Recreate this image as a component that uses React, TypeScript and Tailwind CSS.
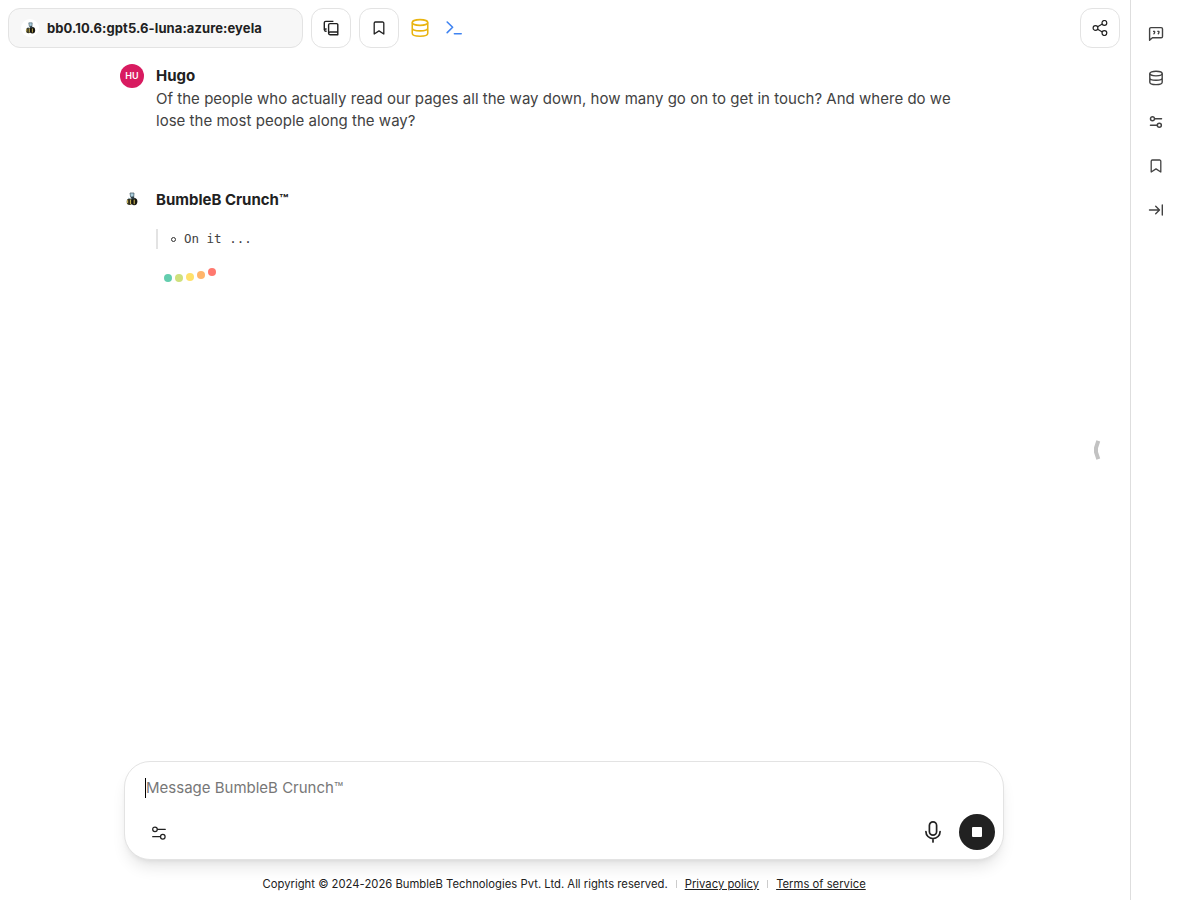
import React from "react";

const Bee = ({ className = "" }: { className?: string }) => (
  <svg viewBox="0 0 12 14" className={className}>
    <path d="M4 1h4l-.3 4H4.6z" fill="#a9cddd" stroke="#40545f" strokeWidth=".7" />
    <ellipse cx="3.6" cy="9.8" rx="2.9" ry="3.2" fill="#35321f" />
    <ellipse cx="8.2" cy="9.6" rx="3.2" ry="3.7" fill="#17150f" />
    <path d="M1.6 8.2v3M4.6 7.6v4.6M8.2 7.6v4.6" stroke="#d8c25c" strokeWidth="1" />
    <path d="m4.6 5.2 2.8-.6 1.8 2.2-3.4.6z" fill="#2c3b42" />
    <path d="M2.2 6.2 4.6 6.8" stroke="#8ba9b5" strokeWidth=".8" />
  </svg>
);

const Sliders = ({ className = "", weight = 1.25 }: { className?: string; weight?: number }) => (
  <svg viewBox="0 0 16 16" fill="none" stroke="currentColor" strokeWidth={weight} strokeLinecap="round" className={className}>
    <circle cx="4" cy="4.3" r="2.3" />
    <path d="M6.5 4.3h7.8M1.7 11.7h7.8" />
    <circle cx="11.8" cy="11.7" r="2.3" />
  </svg>
);

const Bookmark = ({ className = "" }: { className?: string }) => (
  <svg viewBox="0 0 16 16" fill="none" stroke="currentColor" strokeWidth="1.3" strokeLinejoin="round" className={className}>
    <path d="M3.2 3.2a1.2 1.2 0 0 1 1.2-1.2h7.2a1.2 1.2 0 0 1 1.2 1.2V14L8 10.9 3.2 14z" />
  </svg>
);

const Database = ({ className = "", weight = 1.4 }: { className?: string; weight?: number }) => (
  <svg viewBox="0 0 16 16" fill="none" stroke="currentColor" strokeWidth={weight} className={className}>
    <ellipse cx="8" cy="3.6" rx="6.2" ry="2.3" />
    <path d="M1.8 3.6v8.6c0 1.4 2.6 2.4 6.2 2.4s6.2-1 6.2-2.4V3.6M1.8 8c0 1.3 2.6 2.3 6.2 2.3s6.2-1 6.2-2.3" />
  </svg>
);

const Copy = () => (
  <svg viewBox="0 0 16 16" fill="none" stroke="currentColor" strokeWidth="1.4" strokeLinejoin="round" className="size-4">
    <path d="M14.8 12V4.7a1.1 1.1 0 0 0-1.1-1.1H7A1.4 1.4 0 0 0 5.6 5v8.3a1.4 1.4 0 0 0 1.4 1.4h7.8V12H7a1.4 1.4 0 0 0-1.4 1.3" />
    <path d="M3.6 11.2h-.9a1.4 1.4 0 0 1-1.4-1.4V2.9a1.5 1.5 0 0 1 1.5-1.5h7.6M3.6 9H2.7a1.4 1.4 0 0 0-1.4 1.1" />
  </svg>
);

const Share = () => (
  <svg viewBox="0 0 16 16" fill="none" stroke="currentColor" strokeWidth="1.2" className="size-4">
    <circle cx="3.5" cy="8" r="2.4" />
    <circle cx="12.4" cy="2.9" r="2.4" />
    <circle cx="12.4" cy="13.1" r="2.4" />
    <path d="m5.6 6.8 4.7-2.7M5.6 9.2l4.7 2.7" />
  </svg>
);

const Quote = () => (
  <svg viewBox="0 0 16 16" fill="none" stroke="currentColor" strokeWidth="1.4" strokeLinejoin="round" className="size-4">
    <path d="M1.6 14.2V2.9a1.3 1.3 0 0 1 1.3-1.3h10.3a1.3 1.3 0 0 1 1.3 1.3v7.6a1.3 1.3 0 0 1-1.3 1.3H4.4z" />
    <path d="M5 5.4h1.6v1.1c0 .8-.4 1.3-1.1 1.6M9.3 5.4h1.6v1.1c0 .8-.4 1.3-1.1 1.6" />
  </svg>
);

const squareButton = "flex size-10 items-center justify-center rounded-xl border border-[#e3e3e3] bg-white text-[#212121]";
const dots = ["bg-[#63cdae] mt-1.5", "bg-[#cfe07c] mt-1.5", "bg-[#ffe16b] mt-[5px]", "bg-[#ffb56b] mt-[3px]", "bg-[#ff796f]"];

export default function App() {
  return (
    <div className="flex h-[900px] w-[1180px] overflow-hidden bg-white font-['Inter',sans-serif] text-[#212121]">
      <main className="flex w-[1130px] flex-col">
        <header className="flex h-14 shrink-0 items-center pr-2.5 pl-2">
          <button className="flex h-10 w-[295px] items-center rounded-xl border border-[#e3e3e3] bg-[#f7f7f7] pl-3">
            <span className="flex size-[18px] items-center justify-center rounded-full bg-white">
              <Bee className="h-3 w-[11px]" />
            </span>
            <span className="ml-2 text-[13px] leading-5 font-bold tracking-[0.09px]">bb0.10.6:gpt5.6-luna:azure:eyela</span>
          </button>
          <button aria-label="Copy" className={`ml-2 ${squareButton}`}><Copy /></button>
          <button aria-label="Bookmark" className={`ml-2 ${squareButton}`}><Bookmark className="size-4" /></button>
          <Database className="ml-[11px] size-5 text-[#e9b410]" weight={1.25} />
          <svg viewBox="0 0 16 14" fill="none" stroke="#3f83f1" strokeWidth="1.6" strokeLinecap="round" strokeLinejoin="round" className="ml-4 h-3.5 w-4">
            <path d="m1.2 1 5.4 5.3-5.4 5.3M8.4 12.8h6.8" />
          </svg>
          <button aria-label="Share" className={`ml-auto ${squareButton}`}><Share /></button>
        </header>

        <section className="flex flex-1 pl-[120px]">
          <div className="w-[850px] pt-2">
            <article className="flex gap-3">
              <div className="flex size-6 shrink-0 items-center justify-center rounded-full bg-[#d81b60] text-[9px] font-semibold text-white">HU</div>
              <div>
                <h2 className="text-[15px] leading-6 font-bold">Hugo</h2>
                <p className="w-[814px] text-[15px] leading-[22px] tracking-[0.021px] text-[#424242]">
                  Of the people who actually read our pages all the way down, how many go on to get in touch? And where do we<br />lose the most people along the way?
                </p>
              </div>
            </article>
            <article className="mt-14 flex gap-3">
              <div className="flex size-6 shrink-0 items-start justify-center pt-1"><Bee className="h-3.5 w-3" /></div>
              <div>
                <h2 className="text-[15px] leading-6 font-bold">BumbleB Crunch™</h2>
                <div className="mt-[17px] flex h-5 items-center border-l-2 border-[#e3e3e3] pl-[13px] font-['DejaVu_Sans_Mono',monospace] text-[12.5px] text-[#424242]">
                  <span className="mr-2 size-[5px] rounded-full border border-[#303030]" />
                  <span className="whitespace-pre">On it ...</span>
                </div>
                <div className="mt-[19px] ml-2 flex gap-[3px]">
                  {dots.map((dot) => <span key={dot} className={`size-2 rounded-full ${dot}`} />)}
                </div>
              </div>
            </article>
          </div>
          <div className="ml-auto flex w-10 items-start pt-[384px]">
            <svg viewBox="0 0 8 20" className="ml-[3px] h-5 w-2" fill="none" stroke="#c2c2c2" strokeWidth="4" strokeLinejoin="round">
              <path d="M5.3.8 3 7.8v4.4l2.3 7" />
            </svg>
          </div>
        </section>

        <form className="ml-[124px] flex h-[99px] w-[880px] shrink-0 flex-col rounded-[26px] border border-[#e3e3e3] bg-white shadow-[0_10px_15px_-3px_rgba(0,0,0,0.1),0_4px_6px_-4px_rgba(0,0,0,0.1)]">
          <div className="mt-4 ml-5 flex h-5 items-center border-l border-black text-[15px] text-[#777]">Message BumbleB Crunch™</div>
          <div className="mt-4 flex h-9 items-center pr-2 pl-[26px]">
            <Sliders className="mt-0.5 size-4" />
            <svg viewBox="0 0 24 24" fill="none" stroke="currentColor" strokeWidth="1.7" strokeLinecap="round" className="ml-auto size-6">
              <rect x="8.4" y="1.8" width="7.2" height="13.4" rx="3.6" />
              <path d="M4.9 11.5a7.1 7.1 0 0 0 14.2 0M12 18.7v3.2" />
            </svg>
            <button type="button" aria-label="Stop" className="ml-3.5 flex size-9 items-center justify-center rounded-full bg-[#212121]">
              <span className="size-2.5 rounded-[1px] bg-white" />
            </button>
          </div>
        </form>
        <footer className="flex h-10 shrink-0 items-center pt-2 pl-[262.5px] text-[11.25px] leading-4 tracking-[0.015px] whitespace-nowrap">
          <span>Copyright © 2024-2026 BumbleB Technologies Pvt. Ltd. All rights reserved.</span>
          <span className="mx-2 h-2 w-px bg-[#ccc]" />
          <span className="underline">Privacy policy</span>
          <span className="mx-2 h-2 w-px bg-[#ccc]" />
          <span className="underline">Terms of service</span>
        </footer>
      </main>
      <aside className="flex w-[50px] flex-col items-center gap-7 border-l border-[#dedede] pt-[26px] text-[#424242]">
        <Quote />
        <Database className="size-4" />
        <Sliders className="my-px size-3.5" weight={1.7} />
        <Bookmark className="size-4" />
        <svg viewBox="0 0 16 16" fill="none" stroke="currentColor" strokeWidth="1.4" strokeLinecap="round" strokeLinejoin="round" className="size-4">
          <path d="M1.5 8h10M7.7 4.2 11.5 8l-3.8 3.8M14.3 3v10" />
        </svg>
      </aside>
    </div>
  );
}
